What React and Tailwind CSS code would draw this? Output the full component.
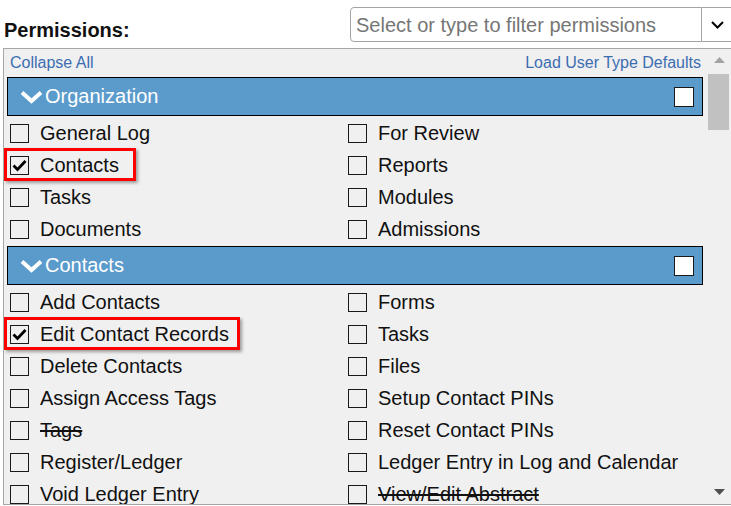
import React from 'react';

const font = { fontFamily: '"Liberation Sans", Arial, sans-serif' };

const sections = [
  {
    title: 'Organization',
    rows: [
      [{ label: 'General Log' }, { label: 'For Review' }],
      [{ label: 'Contacts', checked: true, mark: 'w-[132px]' }, { label: 'Reports' }],
      [{ label: 'Tasks' }, { label: 'Modules' }],
      [{ label: 'Documents' }, { label: 'Admissions' }],
    ],
  },
  {
    title: 'Contacts',
    rows: [
      [{ label: 'Add Contacts' }, { label: 'Forms' }],
      [{ label: 'Edit Contact Records', checked: true, mark: 'w-[236px]' }, { label: 'Tasks' }],
      [{ label: 'Delete Contacts' }, { label: 'Files' }],
      [{ label: 'Assign Access Tags' }, { label: 'Setup Contact PINs' }],
      [{ label: 'Tags', strike: true }, { label: 'Reset Contact PINs' }],
      [{ label: 'Register/Ledger' }, { label: 'Ledger Entry in Log and Calendar' }],
      [{ label: 'Void Ledger Entry' }, { label: 'View/Edit Abstract', strike: true }],
    ],
  },
];

const Box = ({ checked, white }) => (
  <span
    className={`flex h-[19px] w-[19px] shrink-0 items-center justify-center border border-[#1a1a1a] ${
      white ? 'h-[20px] w-[20px] bg-white' : ''
    }`}
  >
    {checked && (
      <svg width="15" height="13" viewBox="0 0 15 13">
        <path d="M1.5 6.5 L5.5 10.5 L13.5 2" fill="none" stroke="#000" strokeWidth="2.8" />
      </svg>
    )}
  </span>
);

const Cell = ({ item }) => (
  <div className="relative flex h-[32px] items-center">
    <span className="ml-[3px]">
      <Box checked={item.checked} />
    </span>
    <span className={`ml-[11px] text-[20px] leading-[23px] text-[#111] ${item.strike ? 'line-through' : ''}`}>
      {item.label}
    </span>
    {/* red annotation box */}
    {item.mark && (
      <span
        className={`pointer-events-none absolute left-[-3px] top-[-1px] h-[33px] border-[3px] border-[#ff0000] shadow-[2px_2px_3px_rgba(0,0,0,0.35)] ${item.mark}`}
      />
    )}
  </div>
);

const Section = ({ title, rows, first }) => (
  <div className={first ? '' : 'mt-px'}>
    <div className="mb-px flex h-[39px] items-center border border-black bg-[#5b9bcc] pl-[12px] pr-[8px]">
      <svg width="23" height="14" viewBox="0 0 23 14" className="shrink-0">
        <path d="M2 2.5 L11.5 11 L21 2.5" fill="none" stroke="#fff" strokeWidth="4" />
      </svg>
      <span className="ml-[2px] flex-1 text-[20px] leading-[23px] text-white">{title}</span>
      <Box white />
    </div>
    <div className="grid grid-cols-[338px_1fr]">
      {rows.map((row, i) => (
        <React.Fragment key={i}>
          <Cell item={row[0]} />
          <Cell item={row[1]} />
        </React.Fragment>
      ))}
    </div>
  </div>
);

export default function App() {
  return (
    <div className="h-[506px] w-[731px] overflow-hidden bg-white" style={font}>
      {/* Title and filter */}
      <div className="flex h-[42px] items-end pt-[7px]">
        <div className="w-[350px] shrink-0 pl-[4px] text-[20px] font-bold leading-[23px] text-[#111]">Permissions:</div>
        <div className="flex h-[35px] shrink-0">
          <div className="flex w-[352px] items-center rounded-l-[4px] border border-[#a3a3a3] pl-[5px] text-[20px] text-[#767676]">
            Select or type to filter permissions
          </div>
          <div className="flex w-[40px] items-center border-y border-r border-[#a3a3a3] pl-[9px]">
            <svg width="13" height="8" viewBox="0 0 13 8">
              <path d="M1 1 L6.5 6.5 L12 1" fill="none" stroke="#000" strokeWidth="2" />
            </svg>
          </div>
        </div>
      </div>

      {/* Permissions panel */}
      <div className="ml-[3px] mt-[6px] flex h-[457px] border-y border-l border-[#a6a6a6] bg-[#f0f0f0]">
        <div className="flex-1 overflow-hidden pl-[3px] pr-[4px]">
          <div className="flex h-[28px] items-center justify-between pl-[3px] pr-[2px] text-[16px] leading-[18px] text-[#3b6db0]">
            <span>Collapse All</span>
            <span>Load User Type Defaults</span>
          </div>
          {sections.map((s, i) => (
            <Section key={s.title} title={s.title} rows={s.rows} first={i === 0} />
          ))}
        </div>

        {/* scrollbar */}
        <div className="flex w-[24px] shrink-0 flex-col">
          <div className="flex h-[25px] items-center justify-center pb-[3px]">
            <svg width="11" height="6" viewBox="0 0 11 6">
              <path d="M0 6 L5.5 0 L11 6 Z" fill="#a3a3a3" />
            </svg>
          </div>
          <div className="ml-px mr-[2px] h-[56px] bg-[#c1c1c1]" />
          <div className="flex-1" />
          <div className="flex h-[24px] items-center justify-center pb-[1px]">
            <svg width="11" height="6" viewBox="0 0 11 6">
              <path d="M0 0 L11 0 L5.5 6 Z" fill="#505050" />
            </svg>
          </div>
        </div>
      </div>
    </div>
  );
}
